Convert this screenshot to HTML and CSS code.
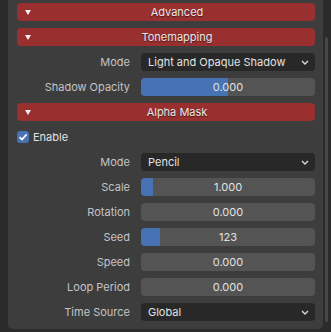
FILE: index.html
```html
<!DOCTYPE html>
<html>
<head>
<meta charset="utf-8">
<link rel="stylesheet" href="styles.css">
</head>
<body>
<div class="editor">
  <div class="gutter"></div>
  <div class="panel">
    <div class="header"><span class="tri"></span><span class="htext">Advanced</span></div>
    <div class="header"><span class="tri"></span><span class="htext">Tonemapping</span></div>
    <div class="row">
      <span class="label">Mode</span>
      <div class="dropdown"><span>Light and Opaque Shadow</span><svg class="chev" width="8" height="5" viewBox="0 0 8 5"><polyline points="1,1 4,4 7,1" fill="none" stroke="#d8d8d8" stroke-width="1.4"/></svg></div>
    </div>
    <div class="row">
      <span class="label">Shadow Opacity</span>
      <div class="slider"><div class="fill" style="width:50%"></div><span class="val">0.000</span></div>
    </div>
    <div class="header"><span class="tri"></span><span class="htext">Alpha Mask</span></div>
    <div class="check-row">
      <span class="checkbox"><svg width="12" height="12" viewBox="0 0 12 12"><polyline points="2.6,6.2 5,8.6 9.6,3.4" fill="none" stroke="#ffffff" stroke-width="1.7"/></svg></span>
      <span class="check-label">Enable</span>
    </div>
    <div class="row">
      <span class="label">Mode</span>
      <div class="dropdown"><span>Pencil</span><svg class="chev" width="8" height="5" viewBox="0 0 8 5"><polyline points="1,1 4,4 7,1" fill="none" stroke="#d8d8d8" stroke-width="1.4"/></svg></div>
    </div>
    <div class="row">
      <span class="label">Scale</span>
      <div class="slider"><div class="fill" style="width:12px"></div><span class="val">1.000</span></div>
    </div>
    <div class="row">
      <span class="label">Rotation</span>
      <div class="slider"><span class="val">0.000</span></div>
    </div>
    <div class="row">
      <span class="label">Seed</span>
      <div class="slider"><div class="fill" style="width:19px"></div><span class="val">123</span></div>
    </div>
    <div class="row">
      <span class="label">Speed</span>
      <div class="slider"><span class="val">0.000</span></div>
    </div>
    <div class="row">
      <span class="label">Loop Period</span>
      <div class="slider"><span class="val">0.000</span></div>
    </div>
    <div class="row">
      <span class="label">Time Source</span>
      <div class="dropdown"><span>Global</span><svg class="chev" width="8" height="5" viewBox="0 0 8 5"><polyline points="1,1 4,4 7,1" fill="none" stroke="#d8d8d8" stroke-width="1.4"/></svg></div>
    </div>
  </div>
  <div class="scrollbar"><div class="thumb"></div></div>
</div>
</body>
</html>
```
FILE: styles.css
```css
html, body {
  margin: 0;
  padding: 0;
  background: #2b2b2b;
}
body {
  width: 331px;
  height: 332px;
  overflow: hidden;
  font-family: Inter, "DejaVu Sans", sans-serif;
  font-size: 11px;
}
.editor {
  display: flex;
  height: 332px;
}
.gutter {
  width: 8px;
  flex: none;
  background: #2b2b2b;
}
.panel {
  width: 315px;
  flex: none;
  box-sizing: border-box;
  height: 329px;
  background: #3d3d3d;
  border-radius: 0 0 5px 5px;
  padding: 3px 8px 8px 9px;
  display: flex;
  flex-direction: column;
  gap: 7px;
}
.header {
  height: 18px;
  background: #992f2f;
  border-radius: 4px;
  display: flex;
  align-items: center;
  color: #e8e8e8;
  text-shadow: 0 1px 1px rgba(0,0,0,0.55);
}
.tri {
  width: 0;
  height: 0;
  margin-left: 8px;
  margin-right: 8px;
  border-left: 3.5px solid transparent;
  border-right: 3.5px solid transparent;
  border-top: 5px solid #f0f0f0;
  flex: none;
}
.htext {
  flex: 1;
  text-align: center;
}
.row {
  height: 18px;
  display: grid;
  grid-template-columns: 113px 1fr;
  column-gap: 11px;
  align-items: center;
}
.label {
  text-align: right;
  color: #c4c4c4;
  white-space: nowrap;
}
.dropdown {
  height: 18px;
  background: #282828;
  border-radius: 4px;
  display: flex;
  align-items: center;
  justify-content: space-between;
  padding: 0 6px 0 7px;
  color: #e2e2e2;
}
.chev {
  flex: none;
}
.slider {
  position: relative;
  height: 18px;
  background: #545454;
  border-radius: 4px;
  overflow: hidden;
  display: flex;
  align-items: center;
  justify-content: center;
  color: #e2e2e2;
}
.fill {
  position: absolute;
  left: 0;
  top: 0;
  bottom: 0;
  background: #4772b3;
}
.val {
  position: relative;
}
.check-row {
  height: 18px;
  display: flex;
  align-items: center;
  gap: 4px;
  color: #e2e2e2;
}
.checkbox {
  width: 12px;
  height: 12px;
  background: #4772b3;
  border-radius: 3px;
  display: flex;
}
.scrollbar {
  width: 8px;
  flex: none;
  position: relative;
}
.thumb {
  position: absolute;
  left: 2px;
  top: 37px;
  width: 3px;
  height: 285px;
  background: #474747;
  border-radius: 2px;
}
```
